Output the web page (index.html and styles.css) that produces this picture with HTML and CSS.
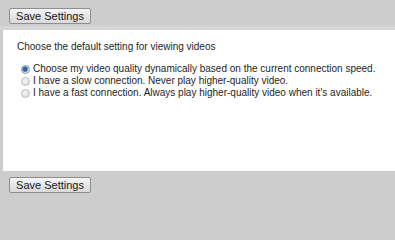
FILE: index.html
```html
<!DOCTYPE html>
<html>
<head>
<meta charset="utf-8">
<link rel="stylesheet" href="styles.css">
</head>
<body>
<div class="bar bar-top">
  <button class="btn" type="button">Save Settings</button>
</div>
<div class="panel">
  <p class="heading">Choose the default setting for viewing videos</p>
  <ul class="options">
    <li class="option"><span class="radio checked"></span><span>Choose my video quality dynamically based on the current connection speed.</span></li>
    <li class="option"><span class="radio"></span><span>I have a slow connection. Never play higher-quality video.</span></li>
    <li class="option"><span class="radio"></span><span>I have a fast connection. Always play higher-quality video when it's available.</span></li>
  </ul>
</div>
<div class="bar bar-bottom">
  <button class="btn" type="button">Save Settings</button>
</div>
</body>
</html>
```
FILE: styles.css
```css
html, body {
  margin: 0;
  padding: 0;
}
body {
  width: 395px;
  height: 200px;
  background: #cdcdcd;
  font-family: "Liberation Sans", Arial, sans-serif;
  color: #222;
  overflow: hidden;
}
.bar {
  display: flex;
  align-items: flex-start;
  padding-left: 9px;
  box-sizing: border-box;
}
.bar-top {
  height: 30px;
  padding-top: 8px;
  border-bottom: 4px solid #d6d6d6;
}
.bar-bottom {
  height: 29px;
  padding-top: 6px;
}
.btn {
  box-sizing: border-box;
  width: 82px;
  height: 16px;
  margin: 0;
  padding: 0;
  border: 1px solid #8f8f8f;
  border-radius: 2px;
  background: linear-gradient(#f6f6f6, #e6e6e6 50%, #dadada);
  font-family: "Liberation Sans", Arial, sans-serif;
  font-size: 11px;
  line-height: 14px;
  color: #1a1a1a;
}
.panel {
  margin-left: 3px;
  height: 141px;
  background: #fff;
  box-sizing: border-box;
  padding: 11px 0 0 14px;
  font-size: 10px;
}
.heading {
  margin: 0;
  line-height: 12px;
  color: #1e1e1e;
}
.options {
  list-style: none;
  margin: 10px 0 0 0;
  padding: 0 0 0 4px;
}
.option {
  display: flex;
  align-items: center;
  gap: 3px;
  height: 12px;
  line-height: 12px;
  color: #1e1e1e;
}
.radio {
  flex: none;
  box-sizing: border-box;
  width: 9px;
  height: 9px;
  border-radius: 50%;
  border: 1px solid #bcbcbc;
  background: radial-gradient(circle at 40% 35%, #f6f6f6, #d8d8d8);
}
.radio.checked {
  border-color: #8a97a6;
  background: radial-gradient(circle at 45% 45%, #2e68a4 0 2.2px, #7d9dbf 2.6px, #dfe7ef 3.3px);
}
```
